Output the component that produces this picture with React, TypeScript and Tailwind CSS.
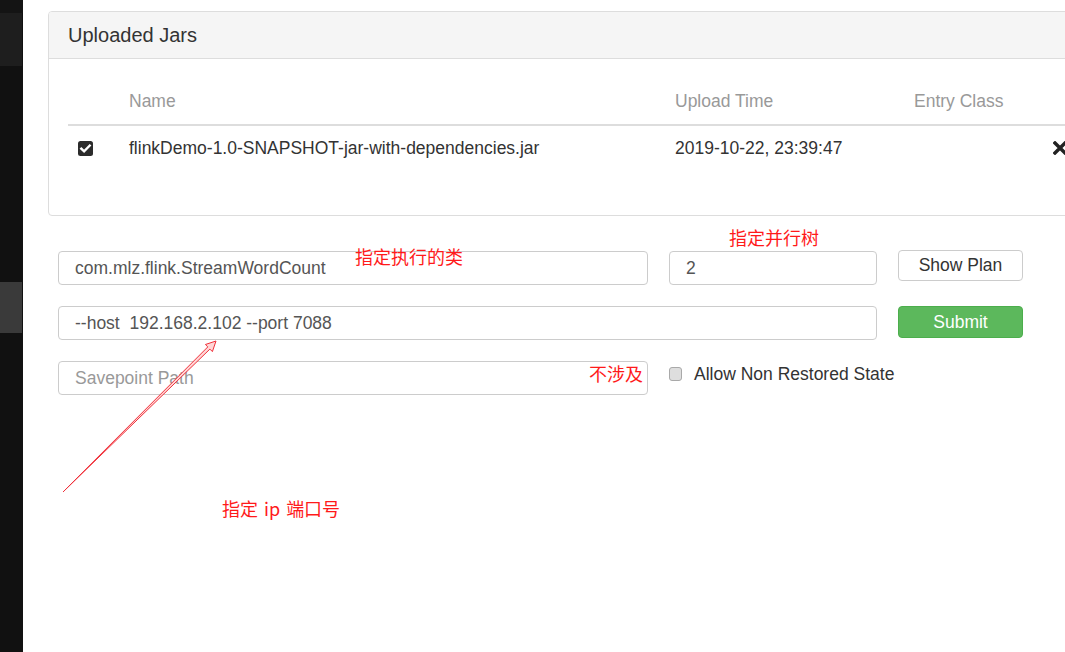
import React from "react";

const font = { fontFamily: '"Liberation Sans", Arial, "Noto Sans CJK SC", sans-serif' };

const CheckSquare = () => (
  <svg width="15" height="15" viewBox="0 0 15 15">
    <rect x="0" y="0" width="15" height="15" rx="2.5" fill="#2b2b2b" />
    <path d="M3.3 7.6 L6.1 10.3 L11.7 4.6" fill="none" stroke="#fff" strokeWidth="2.4" strokeLinecap="square" />
  </svg>
);

const Times = () => (
  <svg width="14" height="14" viewBox="0 0 14 14">
    <path d="M2 2 L12 12 M12 2 L2 12" stroke="#222" strokeWidth="3.4" strokeLinecap="square" />
  </svg>
);

export default function App() {
  return (
    <div className="w-[1065px] h-[652px] overflow-hidden flex bg-white relative text-[17.5px]" style={font}>
      {/* sidebar */}
      <div className="w-[23px] shrink-0 bg-[#111111] flex flex-col">
        <div className="h-[13px] bg-[#141414]" />
        <div className="h-[53px] w-[22px] bg-[#1e1e1e]" />
        <div className="h-[216px]" />
        <div className="h-[51px] w-[22px] bg-[#3a3a3a]" />
      </div>

      <div className="flex-1 min-w-0 pt-[11px] pl-[25px]">
        {/* panel */}
        <div className="w-[1040px] border border-[#dddddd] rounded-[4px] overflow-hidden">
          <div className="h-[47px] bg-[#f5f5f5] border-b border-[#dddddd] px-[19px] flex items-center">
            <span className="text-[20px] text-[#333333]">Uploaded Jars</span>
          </div>
          <div className="px-[19px] pt-[19px] pb-[20px]">
            <div className="mb-[25px]">
              <div className="flex h-[48px] items-center pt-px border-b-2 border-[#dddddd] text-[#999999]">
                <div className="w-[51px]" />
                <div className="w-[546px] pl-[10px]">Name</div>
                <div className="w-[239px] pl-[10px]">Upload Time</div>
                <div className="w-[139px] pl-[10px]">Entry Class</div>
              </div>
              <div className="flex h-[44px] items-center text-[#333333]">
                <div className="w-[51px] pl-[10px] flex items-center">
                  <CheckSquare />
                </div>
                <div className="w-[546px] pl-[10px]">flinkDemo-1.0-SNAPSHOT-jar-with-dependencies.jar</div>
                <div className="w-[239px] pl-[10px]">2019-10-22, 23:39:47</div>
                <div className="w-[139px] pl-[10px]" />
                <div className="pl-[10px] flex items-center">
                  <Times />
                </div>
              </div>
            </div>
          </div>
        </div>

        {/* form */}
        <div className="mt-[34px] ml-[10px] flex flex-col gap-[21px] text-[#555555]">
          <div className="flex items-start gap-[21px]">
            <div className="mt-px w-[590px] h-[34px] border border-[#cccccc] rounded-[4px] pl-[16px] flex items-center">
              com.mlz.flink.StreamWordCount
            </div>
            <div className="mt-px w-[208px] h-[34px] border border-[#cccccc] rounded-[4px] pl-[16px] flex items-center">
              2
            </div>
            <button className="w-[125px] h-[31px] border border-[#cccccc] rounded-[4px] bg-white text-[#333333] flex items-center justify-center">
              Show Plan
            </button>
          </div>
          <div className="flex items-start gap-[21px]">
            <div className="w-[819px] h-[34px] border border-[#cccccc] rounded-[4px] pl-[16px] flex items-center">
              --host&nbsp; 192.168.2.102 --port 7088
            </div>
            <button className="w-[125px] h-[32px] border border-[#4cae4c] rounded-[4px] bg-[#5cb85c] text-white flex items-center justify-center">
              Submit
            </button>
          </div>
          <div className="flex items-start gap-[21px]">
            <div className="w-[590px] h-[34px] border border-[#cccccc] rounded-[4px] pl-[16px] flex items-center text-[#999999]">
              Savepoint Path
            </div>
            <div className="mt-px h-[24px] flex items-center gap-[12px] text-[#333333]">
              <span className="w-[13px] h-[14px] rounded-[3px] border border-[#a9a9a9] bg-[#dedede]" />
              <span>Allow Non Restored State</span>
            </div>
          </div>
        </div>
      </div>

      {/* annotations */}
      <div className="absolute inset-0 pointer-events-none text-[18px] text-[#ff1a1a]" style={{ fontFamily: '"Noto Sans CJK SC", "Liberation Sans", sans-serif' }}>
        <span className="absolute left-[355px] top-[244px] leading-[24px]">指定执行的类</span>
        <span className="absolute left-[729px] top-[225px] leading-[24px]">指定并行树</span>
        <span className="absolute left-[589px] top-[361px] leading-[24px]">不涉及</span>
        <span className="absolute left-[222px] top-[496px] leading-[24px] flex gap-[6px]">
          <span>指定</span>
          <span>ip</span>
          <span>端口号</span>
        </span>
        <svg className="absolute left-0 top-0" width="1065" height="652">
          <polygon
            points="63,492 207.8,346.9 205.4,344.5 216,341 212.4,351.6 209.9,349.1"
            fill="#ffd6d6"
            stroke="#f0303a"
            strokeWidth="1"
            strokeLinejoin="miter"
          />
        </svg>
      </div>
    </div>
  );
}
